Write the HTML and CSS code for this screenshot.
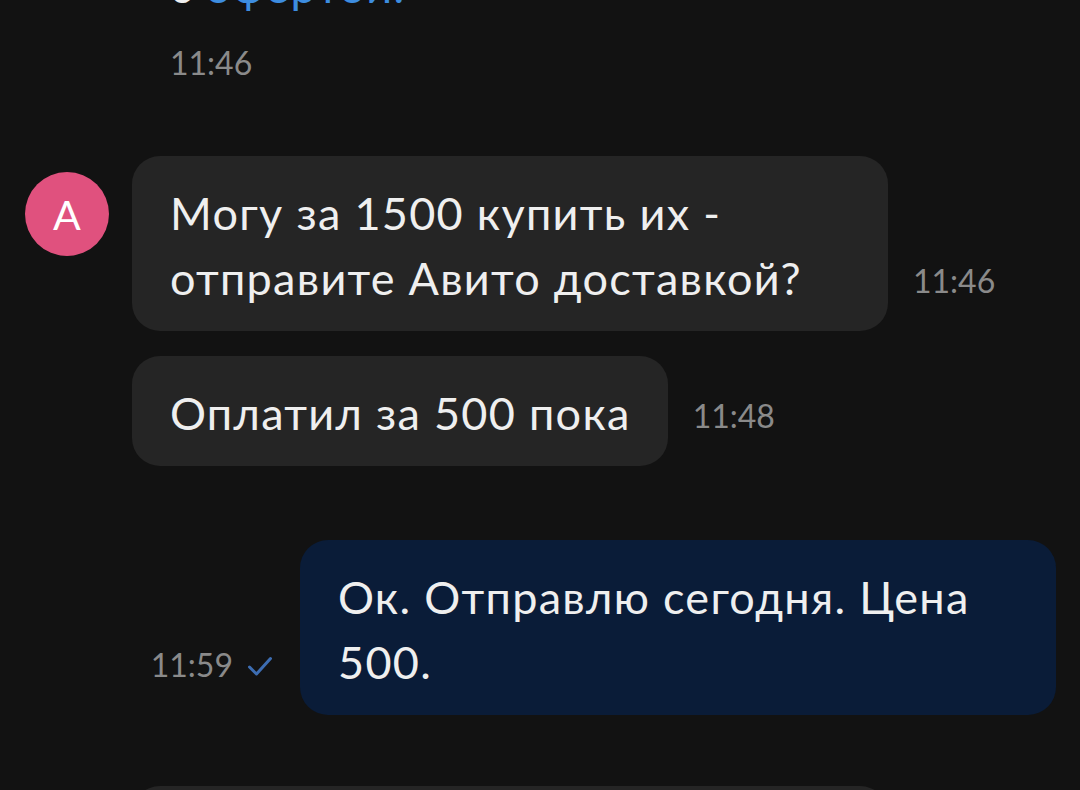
FILE: index.html
```html
<!DOCTYPE html>
<html lang="ru">

<head>
    <meta charset="UTF-8">
    <meta name="viewport" content="width=device-width, initial-scale=1.0">
    <link rel="stylesheet" href="styles.css">
    <title>Сообщения</title>
</head>

<body>
    <div class="feed">
        <div class="sys">
            <p class="sys-text">с <a href="#" class="link">офертой.</a></p>
            <span class="time sys-time">11:46</span>
        </div>

        <div class="group group-in">
            <div class="avatar">A</div>
            <div class="stack">
                <div class="row">
                    <div class="bubble">Могу за 1500 купить их - отправите Авито доставкой?</div>
                    <span class="time">11:46</span>
                </div>
                <div class="row">
                    <div class="bubble">Оплатил за 500 пока</div>
                    <span class="time">11:48</span>
                </div>
            </div>
        </div>

        <div class="group group-out">
            <div class="meta">
                <span class="time">11:59</span>
                <svg class="check" width="26" height="22" viewBox="0 0 26 22">
                    <polyline points="2.5,12 9.5,19 23.5,3.5" fill="none" stroke="#3d6db2" stroke-width="3" stroke-linecap="round" stroke-linejoin="round" />
                </svg>
            </div>
            <div class="bubble bubble-out">Ок. Отправлю сегодня. Цена 500.</div>
        </div>

        <div class="bubble bubble-next"></div>
    </div>
</body>

</html>
```

FILE: styles.css
```css
* {
    margin: 0;
    padding: 0;
    box-sizing: border-box;
}

html,
body {
    height: 100%;
}

body {
    background-color: #121212;
    font-family: Lato, "Open Sans", "Noto Sans", sans-serif;
    color: #efefef;
    overflow: hidden;
}

.feed {
    display: flex;
    flex-direction: column;
    margin-top: -46px;
    padding: 0 24px 0 25px;
}

/* системное сообщение без пузыря */
.sys {
    display: flex;
    flex-direction: column;
    align-items: flex-start;
    margin-left: 145px;
}

.sys-text {
    font-size: 45px;
    line-height: 65px;
    letter-spacing: 1.3px;
}

.link {
    color: #3d8de0;
    text-decoration: none;
}

.sys-time {
    margin-top: 24px;
}

.time {
    font-size: 32px;
    line-height: 40px;
    color: #8a8a8a;
    white-space: nowrap;
}

.group {
    display: flex;
}

.group-in {
    margin-top: 73px;
    gap: 23px;
    align-items: flex-start;
}

.avatar {
    flex: none;
    width: 84px;
    height: 84px;
    margin-top: 16px;
    border-radius: 50%;
    background-color: #e0517e;
    color: #ffffff;
    font-size: 41px;
    display: flex;
    align-items: center;
    justify-content: center;
}

.stack {
    display: flex;
    flex-direction: column;
    gap: 25px;
}

.row {
    display: flex;
    align-items: flex-end;
    gap: 25px;
}

.row .time,
.meta {
    margin-bottom: 30px;
}

.bubble {
    max-width: 756px;
    padding: 25px 37px 20px 38px;
    border-radius: 28px;
    background-color: #252525;
    font-size: 45px;
    line-height: 65px;
    letter-spacing: 1.3px;
}

.group-out {
    margin-top: 74px;
    justify-content: flex-end;
    align-items: flex-end;
    gap: 27px;
}

.meta {
    display: flex;
    align-items: center;
    gap: 14px;
}

.check {
    display: block;
    margin-top: 2px;
}

.bubble-out {
    background-color: #0a1c38;
}

.bubble-next {
    width: 756px;
    height: 120px;
    margin-top: 71px;
    margin-left: 107px;
}
```
